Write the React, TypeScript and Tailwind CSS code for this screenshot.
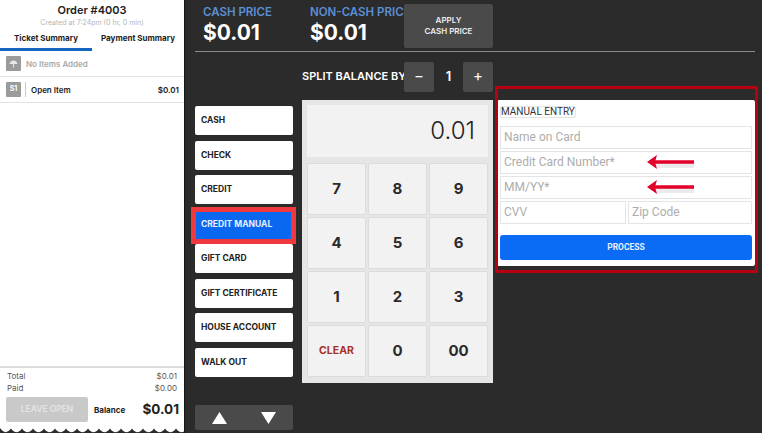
const sans = "font-['Inter','Liberation_Sans',sans-serif]";

const payments = ["CASH", "CHECK", "CREDIT", "CREDIT MANUAL", "GIFT CARD", "GIFT CERTIFICATE", "HOUSE ACCOUNT", "WALK OUT"];
const keys = ["7", "8", "9", "4", "5", "6", "1", "2", "3", "CLEAR", "0", "00"];

function Arrow() {
  return (
    <svg width="48" height="18" viewBox="0 0 48 18" className="absolute left-[146px] top-[2px]">
      <path d="M8 11.5 H47" stroke="#000" strokeOpacity="0.08" strokeWidth="5" />
      <path d="M8 8 H47" stroke="#e3002b" strokeWidth="3.5" />
      <path d="M0 8 L10 1 L8 8 L10 15 Z" fill="#e3002b" />
    </svg>
  );
}

function Field({ label, arrow, className }: { label: string; arrow?: boolean; className?: string }) {
  return (
    <div className={`relative h-[23px] border border-[#e4e4e4] pl-[3px] text-[12px] leading-[21px] text-[#adadad] ${className ?? ""}`}>
      {label}
      {arrow ? <Arrow /> : null}
    </div>
  );
}

function Scallops() {
  return (
    <svg width="184" height="5" viewBox="0 0 184 5" className="block">
      <path
        d={
          "M0 0 " +
          Array.from({ length: 17 })
            .map((_, i) => `Q${i * 11 + 5.5} 8 ${(i + 1) * 11} 0.5`)
            .join(" ") +
          " V0 Z"
        }
        fill="#fff"
      />
    </svg>
  );
}

function Ticket() {
  return (
    <aside className="flex h-[433px] w-[185px] shrink-0 flex-col border-r border-[#161616] text-[#222]">
      <div className="flex flex-1 flex-col bg-white">
        <div className="pt-[2px] text-center text-[11px] font-semibold leading-[16px]">Order #4003</div>
        <div className="text-center text-[7px] leading-[9px] text-[#b5b5b5]">Created at 7:24pm (0 hr, 0 min)</div>
        <div className="mt-[6px] flex h-[18px] text-[8px] font-bold leading-[11px]">
          <div className="w-[92px] border-b-[3px] border-[#1565c0] text-center">Ticket Summary</div>
          <div className="flex-1 text-center">Payment Summary</div>
        </div>
        <div className="flex h-[26px] items-center gap-[5px] border-b border-[#e2e2e2] pl-[6px] text-[8px] font-semibold text-[#a9a9a9]">
          <span className="flex h-[15px] w-[15px] items-center justify-center rounded-[1px] bg-[#9b9b9b]">
            <svg width="9" height="8" viewBox="0 0 9 8">
              <path d="M0.5 4 C1 1.5 3 0.5 4.5 0.5 C6 0.5 8 1.5 8.5 4 Z" fill="#e8e8e8" />
              <path d="M4.5 4 V7.5" stroke="#e8e8e8" strokeWidth="1" />
            </svg>
          </span>
          No Items Added
        </div>
        <div className="flex h-[26px] items-center border-b border-[#e2e2e2] pl-[6px] pr-[5px] text-[8px] font-semibold">
          <span className="flex h-[15px] w-[15px] items-center justify-center rounded-[1px] bg-[#9b9b9b] text-[7px] font-bold text-white">S1</span>
          <span className="ml-[4px] h-[15px] border-l border-[#c9c9c9]" />
          <span className="ml-[5px]">Open Item</span>
          <span className="ml-auto">$0.01</span>
        </div>
        <div className="mt-auto border-t-2 border-[#dcdcdc] px-[7px] pt-[2px] text-[8px] leading-[12px] text-[#555]">
          <div className="flex justify-between"><span>Total</span><span>$0.01</span></div>
          <div className="flex justify-between"><span>Paid</span><span>$0.00</span></div>
        </div>
        <div className="mb-[6px] mt-[3px] flex h-[25px] items-center pl-[6px] pr-[5px]">
          <div className="flex h-[25px] w-[82px] items-center justify-center rounded-[2px] bg-[#c9c9c9] text-[8.5px] font-semibold text-[#e4e4e4]">LEAVE OPEN</div>
          <span className="ml-[6px] text-[8px] font-bold">Balance</span>
          <span className="ml-auto text-[13.5px] font-bold">$0.01</span>
        </div>
      </div>
      <Scallops />
    </aside>
  );
}

function TopBar() {
  return (
    <div className="flex h-[52px] w-[560px] border-b border-[#8a8a8a]">
      <div className="ml-[8px] w-[107px] pt-[5px]">
        <div className="text-[11.5px] font-semibold leading-[14px] text-[#5b8fd6]">CASH PRICE</div>
        <div className="text-[21px] font-bold leading-[27px] text-white">$0.01</div>
      </div>
      <div className="w-[94px] overflow-hidden whitespace-nowrap pt-[5px]">
        <div className="text-[11.5px] font-semibold leading-[14px] text-[#5b8fd6]">NON-CASH PRICE</div>
        <div className="text-[21px] font-bold leading-[27px] text-white">$0.01</div>
      </div>
      <div className="mt-[4px] flex h-[44px] w-[89px] items-center justify-center rounded-[2px] bg-[#4a4a4a] text-center text-[8px] font-semibold leading-[11px] text-[#eee]">
        APPLY<br />CASH PRICE
      </div>
    </div>
  );
}

function SplitRow() {
  return (
    <div className="mt-[9px] flex h-[31px] w-[298px] items-center text-white">
      <div className="ml-[107px] w-[102px] overflow-hidden whitespace-nowrap text-[11px] font-semibold">SPLIT BALANCE BY</div>
      <div className="flex h-[30px] w-[30px] items-center justify-center rounded-[2px] bg-[#4a4a4a] text-[15px]">−</div>
      <div className="w-[29px] text-center text-[13px] font-semibold">1</div>
      <div className="flex h-[30px] w-[30px] items-center justify-center rounded-[2px] bg-[#4a4a4a] text-[15px]">+</div>
    </div>
  );
}

function PaymentList() {
  return (
    <div className="flex w-[98px] flex-col">
      <div className="flex flex-col gap-[5.5px]">
        {payments.map((p) => (
          <div
            key={p}
            className={`flex h-[29px] items-center rounded-[2px] pl-[6px] text-[8.5px] font-bold ${
              p === "CREDIT MANUAL" ? "relative bg-[#0a68f0] text-[#e8f0ff]" : "bg-white text-[#222]"
            }`}
          >
            {p}
            {p === "CREDIT MANUAL" ? (
              <span className="absolute -left-[4px] -right-[3px] -top-[3px] -bottom-[5px] border-[5px] border-[#f0393f]" />
            ) : null}
          </div>
        ))}
      </div>
      <div className="mt-[28.5px] flex h-[25px] items-center justify-between rounded-[2px] bg-[#4a4a4a] px-[17px]">
        <svg width="15" height="12" viewBox="0 0 15 12"><path d="M7.5 0 L15 12 H0 Z" fill="#fff" /></svg>
        <svg width="15" height="12" viewBox="0 0 15 12"><path d="M0 0 H15 L7.5 12 Z" fill="#fff" /></svg>
      </div>
    </div>
  );
}

function Keypad() {
  return (
    <div className="h-[283px] w-[191px] bg-[#e6e6e6] p-[5px]">
      <div className="flex h-[52px] items-center justify-end bg-[#f2f2f2] pr-[13px] text-[24px] font-light text-[#222]">0.01</div>
      <div className="mt-[6px] grid grid-cols-3 gap-[2px]">
        {keys.map((k) => (
          <div
            key={k}
            className={`flex h-[52px] items-center justify-center rounded-[2px] border border-[#dcdcdc] bg-[#f2f2f2] font-bold ${
              k === "CLEAR" ? "text-[10.5px] text-[#a93226]" : "text-[15px] text-[#2a2a2a]"
            }`}
          >
            {k}
          </div>
        ))}
      </div>
    </div>
  );
}

function ManualEntry() {
  return (
    <div className="relative ml-[4px] h-[166px] w-[258px] rounded-[2px] bg-white px-[3px] pt-[6px] font-['Roboto',sans-serif]">
      <span className="absolute -left-[2px] -right-[3px] -top-[14px] -bottom-[7px] border-[3px] border-[#b80012]" />
      <div className="block w-fit rounded-[2px] border border-[#e4e4e4] text-[10px] leading-[10px] text-[#333]">MANUAL ENTRY</div>
      <div className="mt-[8px] flex flex-col gap-[2px]">
        <Field label="Name on Card" />
        <Field label="Credit Card Number*" arrow />
        <Field label="MM/YY*" arrow />
        <div className="flex gap-[2px]">
          <Field label="CVV" className="w-[126px]" />
          <Field label="Zip Code" className="flex-1" />
        </div>
      </div>
      <div className="mt-[11px] flex h-[25px] items-center justify-center rounded-[3px] bg-[#0a6cf5] text-[8.5px] font-bold text-[#e6efff]">PROCESS</div>
    </div>
  );
}

export default function App() {
  return (
    <div className={`flex h-[433px] w-[762px] overflow-hidden bg-[#2b2b2b] ${sans}`}>
      <Ticket />
      <main className="ml-[10px] flex-1">
        <TopBar />
        <SplitRow />
        <div className="mt-[14px] flex">
          <PaymentList />
          <div className="ml-[9px] mt-[-6px]">
            <Keypad />
          </div>
          <div className="mt-[-6px]">
            <ManualEntry />
          </div>
        </div>
      </main>
    </div>
  );
}
